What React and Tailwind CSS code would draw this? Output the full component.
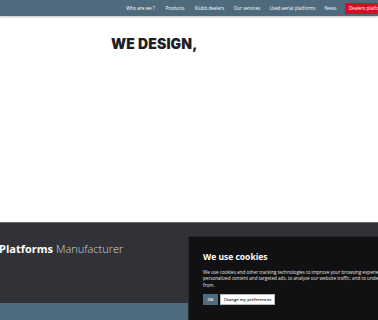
export default function App() {
  const nav = [
    ["Who are we ?", "w-[29px]"],
    ["Products", "w-[20px]"],
    ["Klubb dealers", "w-[29px]"],
    ["Our services", "w-[26px]"],
    ["Used aerial platforms", "w-[45px]"],
    ["News", "w-[11px]"],
  ];
  return (
    <div className="relative w-[378px] h-[320px] overflow-hidden bg-white" style={{ fontFamily: "'Open Sans', 'Liberation Sans', sans-serif" }}>
      <div className="flex flex-col h-full">
        <header className="h-[16px] bg-[#4e6a7c] flex items-center justify-end shadow-[0_1px_2px_rgba(0,0,0,0.25)] relative z-10">
          <nav className="flex items-center gap-[10px] text-[4.6px] text-white whitespace-nowrap">
            {nav.map(([n, w]) => (
              <span key={n} className={`${w} flex justify-center`}>{n}</span>
            ))}
            <span className="ml-[-1px] bg-[#cf1126] h-[11px] flex items-center pl-[4px] w-[40px] -mr-[7px] overflow-hidden">Dealers platform</span>
          </nav>
        </header>
        <main className="flex-1 pl-[111px] pt-[21px]">
          <h1 className="text-[14px] leading-none font-black text-[#1d1f24] tracking-[0.01em]" style={{ fontFamily: "Inter, 'Liberation Sans', sans-serif" }}>WE DESIGN,</h1>
        </main>
        <section className="h-[81px] bg-[#313237] border-t border-[#6a6b70] pt-[20px]">
          <p className="text-[11px] leading-none text-white -ml-[1px] whitespace-nowrap" style={{ fontFamily: "'Open Sans', 'Liberation Sans', sans-serif" }}>
            <span className="font-bold">Platforms</span> <span className="font-light text-[#d4d5d8]">Manufacturer</span>
          </p>
        </section>
        <div className="h-[17px] bg-[#4e6c80]" />
      </div>
      <div className="absolute left-[188px] top-[236px] w-[290px] h-[100px] bg-[#111113] border border-[#2a2b2f] pl-[14px] pt-[16px]">
        <h2 className="text-[8.5px] font-bold text-white leading-none">We use cookies</h2>
        <p className="mt-[7px] text-[4.6px] leading-[6.6px] text-[#e6e6e6] whitespace-nowrap">
          We use cookies and other tracking technologies to improve your browsing experience on our website, to show you
          <br />
          personalized content and targeted ads, to analyze our website traffic, and to understand where our visitors are coming
          <br />
          from.
        </p>
        <div className="mt-[6px] flex gap-[2px] text-[4.2px] font-semibold">
          <span className="h-[11px] w-[15px] bg-[#4e6c80] text-white flex items-center justify-center">OK</span>
          <span className="h-[11px] w-[55px] bg-white text-[#222] flex items-center justify-center border border-[#bbb]">Change my preferences</span>
        </div>
      </div>
    </div>
  );
}
